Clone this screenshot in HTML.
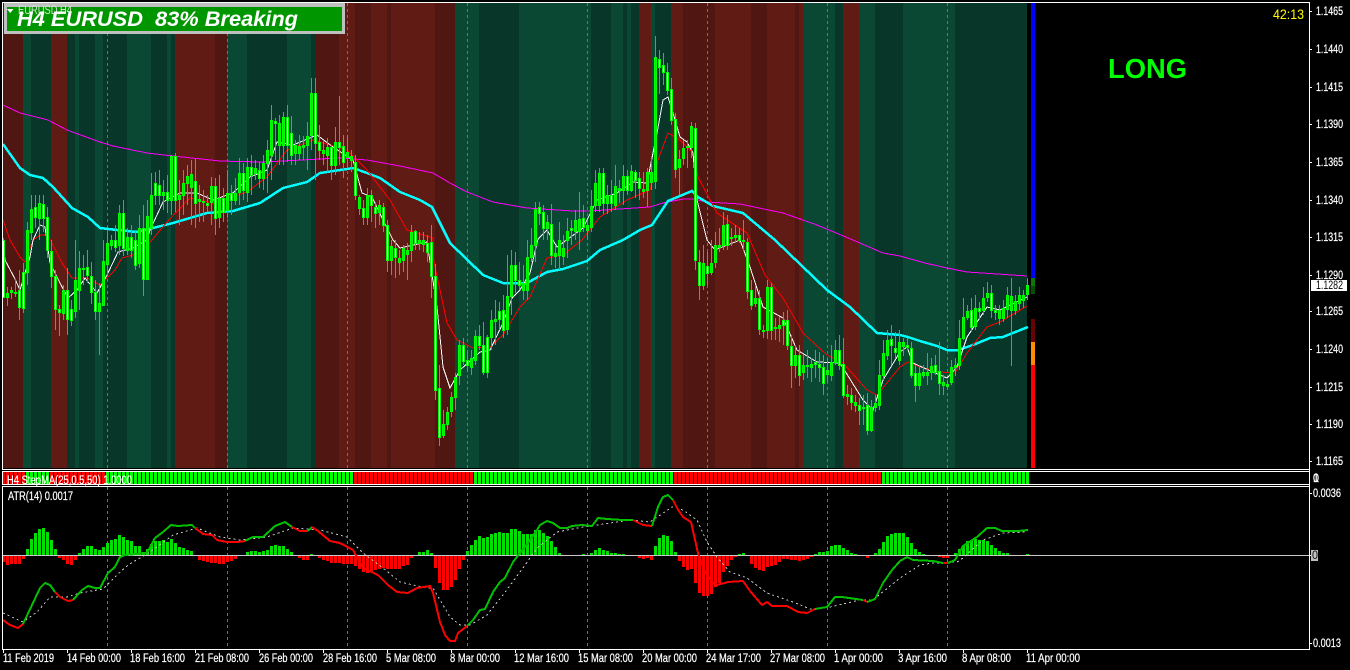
<!DOCTYPE html>
<html><head><meta charset="utf-8"><title>EURUSD H4</title>
<style>
html,body{margin:0;padding:0;background:#000;width:1350px;height:670px;overflow:hidden}
svg{display:block}
text{font-family:"Liberation Sans",sans-serif;fill:#fff;font-size:11.5px;stroke:none}
.ax text,text.ax{stroke:#fff;stroke-width:.22px}
</style></head><body>
<svg id="s" xmlns="http://www.w3.org/2000/svg" width="1350" height="670" viewBox="0 0 1350 670">
<rect width="1350" height="670" fill="#000"/>
<g id="bg" shape-rendering="crispEdges"></g>
<g id="grid" shape-rendering="crispEdges" stroke="#75755c" stroke-width="1" stroke-dasharray="3 3" fill="none"></g>
<g id="lines" shape-rendering="crispEdges" fill="none"></g>
<g id="cand" shape-rendering="crispEdges"></g>
<g id="side" shape-rendering="crispEdges">
<rect x="1031" y="3" width="4" height="275" fill="#0000ff"/>
<rect x="1031" y="278" width="4" height="8" fill="#0a7a0a"/>
<rect x="1031" y="286" width="4" height="8" fill="#054f05"/>
<rect x="1031" y="319" width="4" height="23" fill="#660404"/>
<rect x="1031" y="342" width="4" height="23" fill="#ff8c00"/>
<rect x="1031" y="365" width="4" height="103" fill="#ff0000"/>
</g>
<g id="strip" shape-rendering="crispEdges"></g>
<g id="hist" shape-rendering="crispEdges"></g>
<g id="low" shape-rendering="crispEdges" fill="none"></g>
<g id="frame" shape-rendering="crispEdges" fill="#fff">
<rect x="2" y="2" width="1308" height="1"/>
<rect x="2" y="469" width="1308" height="1"/>
<rect x="2" y="471" width="1308" height="1"/>
<rect x="2" y="484" width="1308" height="1"/>
<rect x="2" y="486" width="1308" height="1"/>
<rect x="2" y="649" width="1308" height="1"/>
<rect x="2" y="2" width="1" height="468"/>
<rect x="2" y="471" width="1" height="14"/>
<rect x="2" y="486" width="1" height="164"/>
<rect x="1309" y="2" width="1" height="648"/>
</g>
<g id="ticks" shape-rendering="crispEdges" fill="#fff"></g>

<rect x="4" y="3" width="341" height="31" fill="#c0c0c0" shape-rendering="crispEdges"/>
<rect x="7" y="7" width="335" height="24" fill="#009600" shape-rendering="crispEdges"/>
<polygon points="7,9 13.5,9 10.2,13" fill="#fff"/>
<text x="18" y="14" textLength="54" lengthAdjust="spacingAndGlyphs" style="fill:#cfe8cf">EURUSD,H4</text>
<text x="17" y="26" xml:space="preserve" textLength="281" lengthAdjust="spacingAndGlyphs" style="font-size:21px;font-weight:bold;font-style:italic">H4 EURUSD  83% Breaking</text>

<text x="1273" y="19" textLength="31" lengthAdjust="spacingAndGlyphs" style="fill:#ffff00;font-size:14px">42:13</text>
<text x="1108" y="78" textLength="79" lengthAdjust="spacingAndGlyphs" style="fill:#00ff00;font-size:28px;font-weight:bold">LONG</text>

<g class="ax">
<text x="1316" y="15" textLength="27" lengthAdjust="spacingAndGlyphs">1.1465</text>
<text x="1316" y="53" textLength="27" lengthAdjust="spacingAndGlyphs">1.1440</text>
<text x="1316" y="91" textLength="27" lengthAdjust="spacingAndGlyphs">1.1415</text>
<text x="1316" y="128" textLength="27" lengthAdjust="spacingAndGlyphs">1.1390</text>
<text x="1316" y="166" textLength="27" lengthAdjust="spacingAndGlyphs">1.1365</text>
<text x="1316" y="204" textLength="27" lengthAdjust="spacingAndGlyphs">1.1340</text>
<text x="1316" y="241" textLength="27" lengthAdjust="spacingAndGlyphs">1.1315</text>
<text x="1316" y="279" textLength="27" lengthAdjust="spacingAndGlyphs">1.1290</text>
<text x="1316" y="315" textLength="27" lengthAdjust="spacingAndGlyphs">1.1265</text>
<text x="1316" y="353" textLength="27" lengthAdjust="spacingAndGlyphs">1.1240</text>
<text x="1316" y="391" textLength="27" lengthAdjust="spacingAndGlyphs">1.1215</text>
<text x="1316" y="428" textLength="27" lengthAdjust="spacingAndGlyphs">1.1190</text>
<text x="1316" y="465" textLength="27" lengthAdjust="spacingAndGlyphs">1.1165</text>
</g>
<rect x="1311" y="280" width="36" height="11" fill="#fff" shape-rendering="crispEdges"/>
<text x="1316" y="289" textLength="27" lengthAdjust="spacingAndGlyphs" style="fill:#000">1.1282</text>

<g class="ax">
<text x="1313" y="482" textLength="6" lengthAdjust="spacingAndGlyphs">0</text>
<text x="1313" y="482" textLength="6" lengthAdjust="spacingAndGlyphs">1</text>
<text x="1313" y="497" textLength="28" lengthAdjust="spacingAndGlyphs">0.0036</text>
</g>
<rect x="1311" y="550" width="7" height="11" fill="#c0c0c0" shape-rendering="crispEdges"/>
<text x="1312" y="559" textLength="6" lengthAdjust="spacingAndGlyphs" style="fill:#111">0</text>
<g class="ax">
<text x="1313" y="647" textLength="28" lengthAdjust="spacingAndGlyphs">0.0013</text>
<text x="7" y="484" textLength="125" lengthAdjust="spacingAndGlyphs">H4 StepMA(25,0.5,50) 1.0000</text>
<text x="8" y="500" textLength="65" lengthAdjust="spacingAndGlyphs">ATR(14) 0.0017</text>
</g>

<g class="ax">
<text x="3" y="662" textLength="51" lengthAdjust="spacingAndGlyphs">11 Feb 2019</text>
<text x="67" y="662" textLength="54" lengthAdjust="spacingAndGlyphs">14 Feb 00:00</text>
<text x="130" y="662" textLength="55" lengthAdjust="spacingAndGlyphs">18 Feb 16:00</text>
<text x="195" y="662" textLength="54" lengthAdjust="spacingAndGlyphs">21 Feb 08:00</text>
<text x="259" y="662" textLength="54" lengthAdjust="spacingAndGlyphs">26 Feb 00:00</text>
<text x="323" y="662" textLength="54" lengthAdjust="spacingAndGlyphs">28 Feb 16:00</text>
<text x="386" y="662" textLength="50" lengthAdjust="spacingAndGlyphs">5 Mar 08:00</text>
<text x="450" y="662" textLength="50" lengthAdjust="spacingAndGlyphs">8 Mar 00:00</text>
<text x="514" y="662" textLength="55" lengthAdjust="spacingAndGlyphs">12 Mar 16:00</text>
<text x="578" y="662" textLength="55" lengthAdjust="spacingAndGlyphs">15 Mar 08:00</text>
<text x="642" y="662" textLength="55" lengthAdjust="spacingAndGlyphs">20 Mar 00:00</text>
<text x="706" y="662" textLength="55" lengthAdjust="spacingAndGlyphs">24 Mar 17:00</text>
<text x="770" y="662" textLength="55" lengthAdjust="spacingAndGlyphs">27 Mar 08:00</text>
<text x="834" y="662" textLength="49" lengthAdjust="spacingAndGlyphs">1 Apr 00:00</text>
<text x="898" y="662" textLength="49" lengthAdjust="spacingAndGlyphs">3 Apr 16:00</text>
<text x="962" y="662" textLength="49" lengthAdjust="spacingAndGlyphs">8 Apr 08:00</text>
<text x="1026" y="662" textLength="54" lengthAdjust="spacingAndGlyphs">11 Apr 00:00</text>
</g>
</svg>
<script>
(function(){
var NS="http://www.w3.org/2000/svg";
function g(id){return document.getElementById(id)}
function add(p,tag,a){var e=document.createElementNS(NS,tag);for(var k in a)e.setAttribute(k,a[k]);g(p).appendChild(e);return e}
var col={a:"#501612",b:"#611b15",c:"#083629",d:"#0a4834"};
var bands=[[23,'a'],[31,'d'],[51,'c'],[67,'b'],[75,'c'],[79,'d'],[95,'c'],[103,'d'],[127,'c'],[151,'d'],[167,'c'],[171,'d'],[175,'c'],[215,'b'],[227,'a'],[247,'d'],[287,'c'],[311,'d'],[315,'c'],[339,'a'],[343,'b'],[355,'b'],[371,'a'],[387,'b'],[391,'a'],[435,'b'],[455,'a'],[479,'d'],[519,'c'],[591,'d'],[611,'c'],[623,'d'],[627,'c'],[631,'d'],[639,'c'],[651,'b'],[655,'d'],[671,'c'],[683,'b'],[715,'a'],[751,'b'],[767,'a'],[795,'b'],[799,'a'],[803,'b'],[835,'d'],[843,'c'],[859,'b'],[875,'d'],[903,'c'],[955,'d'],[1027,'c']];
var x0=3;bands.forEach(function(b){add("bg","rect",{x:x0,y:3,width:b[0]-x0,height:465,fill:col[b[1]]});x0=b[0]});
[107,227,347,467,587,707,827,947].forEach(function(x){
 add("grid","path",{d:"M"+(x+.5)+" 3V468M"+(x+.5)+" 487V649"});
});
function pl(p,pts,c,w,extra){var a={points:pts.join(" "),stroke:c,"stroke-width":w};if(extra)a["stroke-dasharray"]=extra;add(p,"polyline",a)}
pl("lines",[[3,105],[20,113],[48,120],[67,130],[100,142],[113,146],[147,153],[173,156],[220,161],[260,162],[283,161],[320,159],[340,158],[367,160],[400,166],[433,173],[450,183],[467,192],[493,202],[527,208],[573,211],[590,211],[650,207],[663,203],[683,199],[693,199],[707,202],[740,204],[783,213],[817,225],[853,240],[883,253],[900,256],[925,263],[947,268],[967,272],[1027,276]],"#ff00ff",1);
pl("lines",[[3,144],[20,168],[30,175],[43,178],[53,187],[72,208],[88,217],[100,228],[117,230],[137,232],[173,223],[207,213],[233,211],[260,203],[283,188],[307,182],[320,173],[347,169],[353,168],[367,173],[380,178],[400,192],[420,200],[432,207],[450,243],[483,275],[503,283],[527,283],[547,272],[563,269],[587,261],[600,250],[623,240],[640,230],[652,225],[668,201],[692,191],[698,197],[713,206],[743,213],[775,240],[827,290],[850,307],[877,333],[900,335],[908,337],[920,341],[937,346],[947,350],[958,350],[973,345],[990,338],[1003,337],[1028,327]],"#00ffff",2.5);
pl("lines",[[3,220],[10,240],[20,257],[25,262],[33,240],[40,235],[48,235],[62,263],[72,278],[87,278],[100,285],[115,270],[122,258],[133,255],[143,250],[152,240],[167,222],[190,198],[213,203],[247,192],[267,177],[287,150],[313,140],[347,150],[367,170],[390,200],[407,230],[433,238],[433,257],[447,323],[457,340],[473,348],[490,347],[503,335],[520,307],[530,297],[547,258],[563,255],[582,240],[600,217],[627,200],[650,190],[658,160],[668,133],[680,140],[693,153],[698,177],[717,213],[747,233],[765,275],[783,298],[803,333],[827,355],[843,363],[867,390],[877,395],[900,367],[908,362],[920,367],[940,372],[955,373],[967,353],[987,327],[1000,322],[1027,306]],"#ff0000",1);
pl("lines",[[3,240],[5,260],[15,279],[20,290],[25,273],[30,257],[33,240],[40,225],[45,227],[50,263],[60,283],[68,298],[77,290],[85,278],[97,293],[107,275],[118,252],[133,248],[147,240],[150,230],[163,202],[180,193],[197,193],[213,200],[233,193],[250,177],[267,170],[277,142],[293,145],[317,135],[333,147],[353,160],[362,193],[372,197],[383,220],[393,240],[400,248],[427,242],[437,307],[443,367],[450,388],[460,370],[480,352],[490,350],[503,323],[512,298],[520,290],[530,273],[538,239],[547,230],[557,247],[568,239],[583,228],[597,200],[617,193],[633,182],[647,183],[657,133],[663,100],[668,97],[673,113],[680,137],[687,142],[693,153],[697,200],[707,240],[715,250],[740,240],[750,267],[763,307],[783,318],[797,350],[817,362],[840,363],[863,400],[873,410],[883,380],[900,352],[907,347],[913,363],[933,372],[947,378],[957,367],[967,337],[987,307],[1000,310],[1027,297]],"#ffffff",1);

var C=[[240,297,1,238,298],[293,297,0,287,306],[290,292,0,287,299],[292,293,0,279,297],[290,307,1,270,320],[272,308,1,263,313],[230,272,0,222,285],[209,232,0,195,240],[207,217,1,195,228],[203,218,0,195,240],[204,218,1,195,232],[217,250,1,207,258],[251,276,1,240,288],[276,309,1,270,330],[309,312,1,305,336],[290,313,0,285,320],[290,319,1,268,335],[309,320,1,300,326],[280,311,0,240,318],[268,290,0,251,310],[268,269,0,255,285],[267,275,1,250,283],[276,292,1,262,304],[292,311,1,280,320],[303,311,0,283,355],[261,305,0,240,306],[243,264,0,230,275],[240,245,0,235,250],[240,247,1,225,252],[213,245,0,205,255],[213,248,1,200,256],[237,250,0,228,255],[237,250,1,225,258],[240,265,1,230,270],[228,263,0,215,268],[228,279,1,205,296],[216,279,0,200,280],[195,228,0,173,235],[183,195,1,172,205],[185,195,1,170,205],[192,195,0,180,210],[192,200,1,175,213],[156,200,0,155,215],[156,200,1,153,212],[195,199,0,180,225],[183,195,0,170,215],[176,183,0,165,205],[174,187,0,160,225],[181,203,1,159,228],[199,201,0,185,222],[201,202,0,190,222],[203,205,1,195,212],[186,202,0,177,225],[186,218,1,178,235],[198,217,0,175,228],[198,212,1,188,222],[193,210,0,170,218],[193,200,1,185,215],[193,200,0,178,205],[173,192,0,158,205],[173,190,1,163,200],[167,192,0,158,202],[167,175,1,155,195],[168,173,0,160,180],[170,178,1,162,188],[163,178,0,155,190],[150,163,0,140,193],[120,155,0,105,180],[121,123,1,118,160],[123,145,0,115,165],[117,145,0,112,165],[117,145,1,105,162],[133,155,1,116,165],[145,153,0,140,165],[146,153,0,135,160],[145,147,0,136,160],[136,145,0,122,170],[93,135,0,78,150],[93,143,1,78,180],[142,150,1,125,160],[150,153,0,140,165],[147,155,0,138,172],[147,165,1,145,180],[142,165,0,127,175],[142,147,1,96,165],[146,162,1,135,178],[152,157,0,135,168],[156,160,0,150,172],[162,195,1,155,200],[197,208,0,195,215],[208,217,1,200,225],[195,217,0,188,225],[195,205,1,190,222],[207,213,1,202,228],[205,212,0,200,225],[207,225,1,203,232],[225,260,1,220,272],[246,260,0,240,275],[248,257,1,240,278],[258,262,0,250,275],[248,260,0,245,272],[250,254,0,243,280],[232,250,0,225,262],[231,243,1,230,250],[240,243,0,232,250],[240,244,0,232,252],[243,252,1,235,262],[242,276,1,225,298],[276,390,1,264,400],[388,437,1,365,446],[424,435,0,410,438],[412,424,0,407,430],
[397,411,0,392,417],[377,397,0,373,410],[345,375,0,340,385],[345,361,1,338,365],[360,365,1,350,372],[358,367,0,350,375],[336,360,0,330,365],[336,345,1,325,350],[345,372,1,322,375],[337,372,1,335,378],[320,337,0,310,350],[319,321,0,300,345],[311,319,1,302,330],[310,330,1,295,338],[296,329,0,255,335],[265,296,0,250,315],[265,280,1,252,293],[280,285,1,262,290],[283,290,0,265,300],[257,290,0,240,300],[245,257,0,228,262],[209,245,0,202,262],[207,213,1,202,225],[212,228,1,205,240],[222,228,0,215,240],[224,255,1,204,265],[253,256,0,245,268],[240,255,0,222,270],[248,256,0,235,265],[231,240,0,218,258],[228,230,1,220,245],[220,231,0,210,240],[219,231,0,192,250],[218,227,1,205,232],[225,230,0,220,240],[206,227,0,190,232],[183,205,0,170,212],[173,205,0,168,212],[173,203,1,168,214],[195,203,0,185,214],[195,203,1,180,212],[186,205,0,165,210],[188,190,0,180,203],[176,190,0,165,205],[176,190,1,170,195],[171,190,0,165,192],[172,180,1,170,198],[178,188,1,172,200],[189,191,0,172,198],[172,190,0,168,207],[172,182,0,158,190],[57,181,0,36,189],[59,67,1,50,94],[65,72,1,53,85],[72,90,1,63,95],[89,120,1,78,125],[119,169,1,113,178],[159,167,0,150,195],[148,158,0,140,165],[146,147,0,140,168],[126,147,0,122,158],[128,260,1,123,270],[262,285,1,250,300],[263,285,0,245,290],[266,273,1,252,285],[263,272,0,240,275],[245,262,0,232,268],[245,247,0,228,252],[225,245,0,212,250],[224,245,1,215,250],[237,238,1,228,246],[235,237,0,225,243],[235,240,1,228,243],[240,241,0,220,250],[242,291,1,238,299],[290,305,1,280,310],[298,303,0,285,307],[298,329,1,290,335],[330,331,1,325,338],[287,330,0,280,339],[287,330,1,283,340],[327,328,0,318,340],[325,328,0,317,342],[320,325,1,312,345],[320,345,1,310,350],[346,365,1,335,388],[355,365,0,345,378],[355,375,1,345,386],[365,372,0,355,380],[365,366,0,350,378],[364,367,0,358,382],[362,364,1,350,378],[364,367,1,352,382],[367,383,1,355,395],[370,374,0,358,382],[362,375,0,345,381],[350,362,0,340,365],[350,365,1,335,370],[364,395,1,338,398],[394,396,0,385,405],[395,402,1,388,410],[402,405,0,395,412],[405,410,1,398,425],[407,408,0,395,425],[405,430,1,393,435],[407,430,0,400,432],[403,407,0,395,412],[375,405,0,360,410],[353,375,0,340,380],[340,355,0,330,360],[339,345,1,325,365],[348,352,1,332,358],[342,360,0,330,365],
[342,346,0,338,356],[345,347,1,338,350],[348,375,1,342,378],[373,385,1,365,402],[373,385,0,365,390],[372,375,0,365,378],[372,375,0,353,385],[366,372,0,358,380],[365,372,1,355,375],[371,383,1,342,395],[382,385,0,375,395],[384,386,0,380,390],[367,382,0,360,385],[365,367,0,358,376],[338,365,0,320,370],[317,338,0,298,340],[311,317,0,305,320],[310,327,1,298,332],[308,326,0,295,330],[308,311,1,302,320],[298,310,0,287,315],[293,297,0,282,302],[293,310,1,285,318],[310,312,1,305,320],[310,318,0,305,325],[308,318,0,300,322],[295,309,0,287,318],[296,310,0,278,366],[301,310,0,295,315],[295,303,0,287,310],[295,300,0,290,308],[285,294,0,278,300]];
var w="",b="",f="";
C.forEach(function(c,i){
 var x=3+4*i,t=c[0],h=Math.max(c[1]-t+1,2);
 w+="M"+x+" "+c[3]+"h1V"+c[4]+"h-1z";
 b+="M"+(x-1)+" "+t+"h3v"+h+"h-3z";
 if(h>=3){
  b+="M"+x+" "+(t+1)+"h1v"+(h-2)+"h-1z";
  if(c[2])f+="M"+x+" "+(t+1)+"h1v"+(h-2)+"h-1z";
 }
});
add("cand","path",{d:w,fill:"#14d214"});
add("cand","path",{d:b,fill:"#00ff00","fill-rule":"evenodd"});
add("cand","path",{d:f,fill:"#ffffff"});

function stripCol(x){ if(x<26)return"#f00";if(x<49)return"#0f0";if(x<106)return"#f00";if(x<353)return"#0f0";if(x<474)return"#f00";if(x<673)return"#0f0";if(x<881)return"#f00";return"#0f0"}
for(var i=0;i<257;i++){var x=3+4*i;add("strip","rect",{x:x-(i?1:0),y:472,width:i?3:2,height:12,fill:stripCol(x)})}

var H=[-7,-10,-9,-9,-9,-4,6,16,22,26,27,23,15,6,-3,-5,-9,-10,-5,2,6,9,9,6,5,8,12,15,16,20,18,15,14,9,9,3,6,11,14,14,15,13,16,12,8,7,5,4,-1,-5,-6,-7,-8,-8,-9,-9,-7,-6,-4,-1,-1,3,4,4,3,4,5,9,10,9,9,6,3,0,-3,-5,-5,1,-1,-3,-5,-6,-8,-8,-8,-9,-9,-9,-11,-14,-17,-18,-16,-15,-14,-13,-14,-14,-14,-14,-11,-10,-3,-1,3,3,5,2,-13,-28,-35,-35,-32,-25,-14,-5,4,10,15,19,17,18,21,22,23,22,22,26,26,24,21,21,21,25,25,22,19,14,8,2,-1,-1,-1,-1,0,1,-1,2,5,7,5,4,2,2,1,1,-1,-1,-1,-3,-4,-3,-5,9,17,20,19,14,3,-6,-12,-15,-14,-28,-38,-41,-41,-39,-32,-28,-17,-11,-5,-2,1,2,-1,-9,-13,-15,-16,-12,-11,-10,-7,-4,-4,-5,-5,-6,-5,-4,-2,1,3,3,4,9,10,10,7,5,2,1,-1,-1,-3,-1,2,6,13,19,21,22,22,22,18,12,6,3,1,-1,-1,-1,-2,-3,-3,-1,2,6,10,14,14,16,15,15,14,10,7,4,2,2,-1,-1,-1,-1,1];
H.forEach(function(h,i){ if(!h)return; var x=3+4*i;
 if(h>0)add("hist","rect",{x:x-1,y:555-h,width:3,height:h,fill:"#00e000"});
 else add("hist","rect",{x:x-1,y:555,width:3,height:-h,fill:"#ff0000"});
});

pl("low",[[3,613],[23,622],[37,612],[50,597],[67,597],[80,593],[103,589],[117,575],[128,565],[150,552],[173,535],[197,528],[220,537],[240,540],[267,537],[293,528],[320,530],[347,537],[363,553],[383,568],[400,582],[427,588],[433,588],[450,617],[460,625],[470,625],[487,615],[503,595],[523,568],[537,548],[557,532],[577,528],[597,525],[630,520],[650,522],[672,507],[683,510],[697,520],[707,542],[717,557],[730,572],[747,578],[767,593],[793,602],[810,609],[830,607],[860,600],[873,600],[900,578],[920,565],[933,563],[957,562],[963,558],[983,540],[1003,533],[1025,532]],"#c8c8c8",1,"2 3");
add("low","path",{d:"M3 555.5H1309",stroke:"#c8c8c8","stroke-width":1});

var P=[[3,620],[10,625],[18,628],[23,624],[32,605],[40,588],[45,583],[50,585],[55,592],[60,597],[68,601],[73,600],[82,590],[88,586],[95,588],[100,588],[108,573],[115,567],[120,557],[125,555],[147,553],[155,538],[163,532],[171,525],[178,526],[192,525],[195,528],[203,534],[212,535],[217,540],[227,542],[237,542],[245,541],[253,537],[263,537],[275,526],[285,522],[292,527],[300,531],[308,531],[312,527],[318,531],[330,541],[340,543],[353,550],[363,568],[378,575],[388,585],[397,592],[408,593],[417,588],[430,586],[433,593],[440,622],[445,635],[450,641],[455,641],[458,633],[467,626],[473,620],[480,610],[485,609],[493,592],[500,582],[505,578],[513,562],[520,553],[528,543],[537,530],[540,525],[547,521],[553,523],[560,528],[567,528],[572,526],[582,525],[592,526],[598,518],[607,519],[623,520],[633,520],[643,525],[652,526],[658,507],[663,497],[668,495],[673,500],[677,508],[683,517],[691,522],[698,553],[705,572],[713,583],[717,585],[728,582],[743,581],[750,591],[762,605],[767,602],[772,606],[787,606],[798,612],[807,613],[815,609],[827,607],[835,597],[842,597],[863,600],[867,602],[875,599],[883,583],[892,570],[900,561],[907,557],[913,560],[933,561],[943,563],[948,563],[955,560],[963,546],[977,537],[987,528],[995,528],[1002,531],[1018,531],[1028,530]];
var R=[[23,"r"],[55,"g"],[73,"r"],[195,"g"],[245,"r"],[292,"g"],[308,"r"],[312,"g"],[467,"r"],[623,"g"],[627,"r"],[633,"g"],[652,"r"],[673,"g"],[815,"r"],[863,"g"],[867,"r"],[943,"g"],[948,"r"],[1030,"g"]];
function cAt(x){for(var i=0;i<R.length;i++)if(x<=R[i][0])return R[i][1];return"g"}
var cur=null,seg=[];
for(var i=1;i<P.length;i++){
 var c=cAt((P[i-1][0]+P[i][0])/2);
 if(c!==cur){ if(seg.length)pl("low",seg,cur=="r"?"#ff0000":"#00c000",2); seg=[P[i-1]];cur=c }
 seg.push(P[i]);
}
pl("low",seg,cur=="r"?"#ff0000":"#00c000",2);

for(var x=3;x<=1027;x+=64)add("ticks","rect",{x:x,y:650,width:1,height:3});
[11,49,87,124,162,200,237,275,311,349,387,424,461,493,555,643].forEach(function(y){add("ticks","rect",{x:1310,y:y,width:2,height:1})});
})();
</script>
</body></html>
